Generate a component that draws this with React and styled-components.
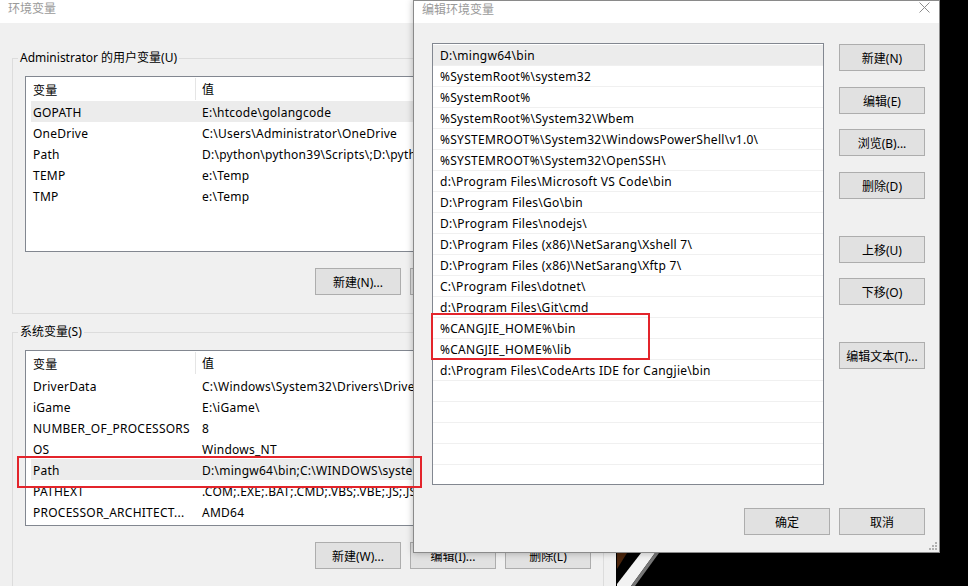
import styled, { createGlobalStyle } from 'styled-components';

const GlobalStyle = createGlobalStyle`
  html, body {
    margin: 0;
    padding: 0;
  }
  body {
    width: 968px;
    height: 586px;
    overflow: hidden;
    background: #000;
    font-family: "Noto Sans", "Noto Sans CJK SC", sans-serif;
    font-size: 12px;
    color: #000;
  }
`;

const Desktop = styled.div`
  position: relative;
  width: 968px;
  height: 586px;
  overflow: hidden;
  background: #000;
`;

const Wallpaper = styled.svg`
  position: absolute;
  left: 617px;
  top: 553px;
`;

const Window = styled.section`
  position: absolute;
  left: ${(p) => p.$x}px;
  top: ${(p) => p.$y}px;
  width: ${(p) => p.$w}px;
  height: ${(p) => p.$h}px;
  box-sizing: border-box;
  background: #f0f0f0;
  display: flex;
  flex-direction: column;
  overflow: hidden;
  border: ${(p) => (p.$front ? '1px solid #8a8a8a' : 'none')};
  box-shadow: ${(p) => (p.$front ? '0 0 7px rgba(0, 0, 0, 0.28)' : 'none')};
`;

const TitleBar = styled.header`
  flex: none;
  height: ${(p) => p.$h}px;
  background: #fff;
  color: #9a9a9a;
  display: flex;
  align-items: flex-start;
  justify-content: space-between;
  padding-left: ${(p) => p.$pad}px;
  line-height: 18px;
`;

const CloseIcon = styled.svg`
  margin: 1px 9px 0 0;
`;

const LeftBody = styled.div`
  flex: 1;
  min-width: 0;
  padding: 27px 12px 0 12px;
  display: flex;
  flex-direction: column;
  gap: 10px;
`;

const Group = styled.fieldset`
  margin: 0;
  min-width: 0;
  min-inline-size: 0;
  padding: 10px 12px 18px 12px;
  border: 1px solid #dcdcdc;
  display: flex;
  flex-direction: column;
  gap: 16px;
`;

const Legend = styled.legend`
  padding: 0 2px;
  margin-left: -7px;
  line-height: 16px;
`;

const VarList = styled.div`
  height: 176px;
  min-width: 0;
  box-sizing: border-box;
  border: 1px solid #828790;
  background: #fff;
  overflow: hidden;
  letter-spacing: 0.25px;
`;

const VarRow = styled.div`
  display: flex;
  box-sizing: border-box;
  height: ${(p) => (p.$head ? 24 : 21)}px;
  padding-top: 2px;
  align-items: center;
  margin-left: 5px;
  background: ${(p) => (p.$sel ? '#ececec' : 'transparent')};
  white-space: nowrap;
`;

const NameCell = styled.div`
  flex: none;
  width: 162px;
  padding-left: 2px;
  overflow: hidden;
`;

const ValueCell = styled.div`
  flex: 1;
  min-width: 0;
  align-self: stretch;
  display: flex;
  align-items: center;
  padding-left: 6px;
  overflow: hidden;
  border-left: 1px solid ${(p) => (p.$head ? '#e5e5e5' : 'transparent')};
  margin: ${(p) => (p.$head ? '-1px 0 1px 0' : '0')};
`;

const ButtonRow = styled.div`
  display: flex;
  justify-content: flex-end;
  gap: 9px;
`;

const Button = styled.button`
  flex: none;
  width: 86px;
  height: 27px;
  margin-top: ${(p) => p.$mt || 0}px;
  padding: 0;
  border: 1px solid #adadad;
  background: #e1e1e1;
  font-family: inherit;
  font-size: 12px;
  color: #000;
`;

const FrontBody = styled.div`
  flex: 1;
  padding: 20px 14px 0 18px;
  display: flex;
  flex-direction: column;
  gap: 23px;
`;

const EditArea = styled.div`
  display: flex;
  gap: 15px;
`;

const PathList = styled.div`
  flex: none;
  width: 392px;
  height: 442px;
  box-sizing: border-box;
  border: 1px solid #828790;
  background: #fff;
  padding: 1px 0 0 0;
  overflow: hidden;
  letter-spacing: 0.28px;
`;

const PathRow = styled.div`
  height: 20px;
  line-height: 22px;
  overflow: hidden;
  border-bottom: 1px solid #f0f0f0;
  padding-left: 7px;
  background: ${(p) => (p.$sel ? '#ececec' : 'transparent')};
  white-space: nowrap;
`;

const SideButtons = styled.div`
  display: flex;
  flex-direction: column;
`;

const Grip = styled.svg`
  position: absolute;
  right: 2px;
  bottom: 2px;
`;

const Mark = styled.div`
  position: absolute;
  left: ${(p) => p.$x}px;
  top: ${(p) => p.$y}px;
  width: ${(p) => p.$w}px;
  height: ${(p) => p.$h}px;
  box-sizing: border-box;
  border: 2px solid #e3242b;
  pointer-events: none;
`;

const userVars = [
  ['GOPATH', 'E:\\htcode\\golangcode'],
  ['OneDrive', 'C:\\Users\\Administrator\\OneDrive'],
  ['Path', 'D:\\python\\python39\\Scripts\\;D:\\python\\python39\\;C:\\Users\\Administrator'],
  ['TEMP', 'e:\\Temp'],
  ['TMP', 'e:\\Temp'],
];

const systemVars = [
  ['DriverData', 'C:\\Windows\\System32\\Drivers\\DriverData'],
  ['iGame', 'E:\\iGame\\'],
  ['NUMBER_OF_PROCESSORS', '8'],
  ['OS', 'Windows_NT'],
  ['Path', 'D:\\mingw64\\bin;C:\\WINDOWS\\system32;C:\\WINDOWS;C:\\WINDOWS\\System32\\Wbem'],
  ['PATHEXT', '.COM;.EXE;.BAT;.CMD;.VBS;.VBE;.JS;.JSE;.WSF;.WSH;.MSC'],
  ['PROCESSOR_ARCHITECT...', 'AMD64'],
];

const paths = [
  'D:\\mingw64\\bin',
  '%SystemRoot%\\system32',
  '%SystemRoot%',
  '%SystemRoot%\\System32\\Wbem',
  '%SYSTEMROOT%\\System32\\WindowsPowerShell\\v1.0\\',
  '%SYSTEMROOT%\\System32\\OpenSSH\\',
  'd:\\Program Files\\Microsoft VS Code\\bin',
  'D:\\Program Files\\Go\\bin',
  'D:\\Program Files\\nodejs\\',
  'D:\\Program Files (x86)\\NetSarang\\Xshell 7\\',
  'D:\\Program Files (x86)\\NetSarang\\Xftp 7\\',
  'C:\\Program Files\\dotnet\\',
  'd:\\Program Files\\Git\\cmd',
  '%CANGJIE_HOME%\\bin',
  '%CANGJIE_HOME%\\lib',
  'd:\\Program Files\\CodeArts IDE for Cangjie\\bin',
  '', '', '', '', '',
];

const VarGroup = ({ title, rows, selected, buttons }) => (
  <Group>
    <Legend>{title}</Legend>
    <VarList>
      <VarRow $head>
        <NameCell>变量</NameCell>
        <ValueCell $head>值</ValueCell>
      </VarRow>
      {rows.map(([name, value], i) => (
        <VarRow key={name + i} $sel={i === selected}>
          <NameCell>{name}</NameCell>
          <ValueCell>{value}</ValueCell>
        </VarRow>
      ))}
    </VarList>
    <ButtonRow>
      {buttons.map((b) => (
        <Button key={b}>{b}</Button>
      ))}
    </ButtonRow>
  </Group>
);

export default function App() {
  return (
    <>
      <GlobalStyle />
      <Desktop>
        <Wallpaper width="60" height="33" viewBox="0 0 60 33">
          <polygon points="0,0 10,0 0,16" fill="#4a250c" />
          <polygon points="24,0 38,0 14,33 0,33 0,31" fill="#f2f2f2" />
          <polygon points="38,0 42,0 18,33 14,33" fill="#777" />
        </Wallpaper>

        <Window $x={0} $y={0} $w={616} $h={600}>
          <TitleBar $h={23} $pad={8}>环境变量</TitleBar>
          <LeftBody>
            <VarGroup
              title="Administrator 的用户变量(U)"
              rows={userVars}
              selected={0}
              buttons={['新建(N)...', '编辑(E)...', '删除(D)']}
            />
            <VarGroup
              title="系统变量(S)"
              rows={systemVars}
              selected={4}
              buttons={['新建(W)...', '编辑(I)...', '删除(L)']}
            />
          </LeftBody>
        </Window>

        <Window $front $x={413} $y={0} $w={527} $h={553}>
          <TitleBar $h={22} $pad={8}>
            编辑环境变量
            <CloseIcon width="11" height="11" viewBox="0 0 11 11">
              <path d="M0.5 0.5 L10.5 10.5 M10.5 0.5 L0.5 10.5" stroke="#8c8c8c" strokeWidth="1" />
            </CloseIcon>
          </TitleBar>
          <FrontBody>
            <EditArea>
              <PathList>
                {paths.map((p, i) => (
                  <PathRow key={i} $sel={i === 0}>
                    {p}
                  </PathRow>
                ))}
              </PathList>
              <SideButtons>
                <Button $mt={1}>新建(N)</Button>
                <Button $mt={16}>编辑(E)</Button>
                <Button $mt={15}>浏览(B)...</Button>
                <Button $mt={16}>删除(D)</Button>
                <Button $mt={37}>上移(U)</Button>
                <Button $mt={15}>下移(O)</Button>
                <Button $mt={37}>编辑文本(T)...</Button>
              </SideButtons>
            </EditArea>
            <ButtonRow>
              <Button>确定</Button>
              <Button>取消</Button>
            </ButtonRow>
          </FrontBody>
          <Grip width="9" height="9" viewBox="0 0 9 9">
            <rect x="7" y="1" width="2" height="2" fill="#b0b0b0" />
            <rect x="4" y="4" width="2" height="2" fill="#b0b0b0" />
            <rect x="7" y="4" width="2" height="2" fill="#b0b0b0" />
            <rect x="1" y="7" width="2" height="2" fill="#b0b0b0" />
            <rect x="4" y="7" width="2" height="2" fill="#b0b0b0" />
            <rect x="7" y="7" width="2" height="2" fill="#b0b0b0" />
          </Grip>
        </Window>

        <Mark $x={17} $y={456} $w={405} $h={32} />
        <Mark $x={431} $y={313} $w={219} $h={47} />
      </Desktop>
    </>
  );
}
